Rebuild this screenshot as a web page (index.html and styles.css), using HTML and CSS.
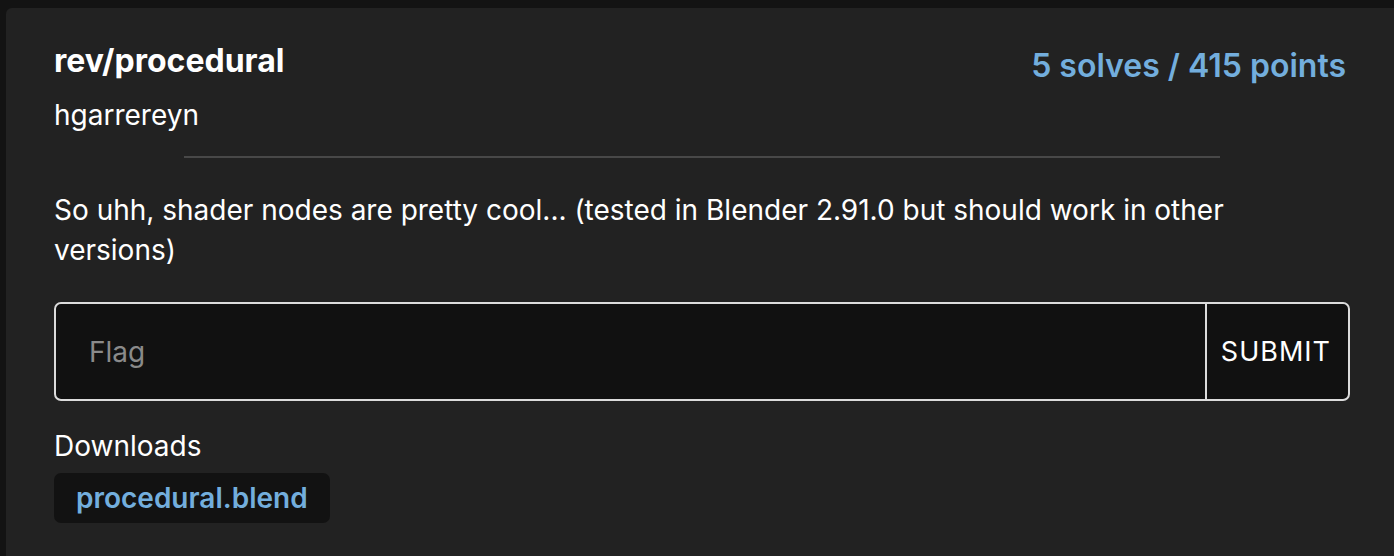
FILE: index.html
```html
<!DOCTYPE html>
<html>
<head>
<meta charset="utf-8">
<link rel="stylesheet" href="styles.css">
</head>
<body>
<div class="page">
  <div class="card">
    <div class="header">
      <div class="titles">
        <div class="title">rev/procedural</div>
        <div class="author">hgarrereyn</div>
      </div>
      <div class="score">5 solves / 415 points</div>
    </div>
    <hr class="divider">
    <p class="desc">So uhh, shader nodes are pretty cool... (tested in Blender 2.91.0 but should work in other versions)</p>
    <form class="flag-form">
      <input class="flag-input" type="text" placeholder="Flag">
      <button class="submit" type="button">SUBMIT</button>
    </form>
    <div class="downloads-label">Downloads</div>
    <div class="downloads">
      <a class="file" href="#">procedural.blend</a>
    </div>
  </div>
</div>
</body>
</html>
```
FILE: styles.css
```css
html, body {
  margin: 0;
  background: #131313;
  overflow: hidden;
}
body {
  font-family: Inter, "Noto Sans", sans-serif;
  color: #fff;
}
.page {
  padding: 8px 0 0 6px;
}
.card {
  background: #222222;
  border-radius: 6px 0 0 0;
  padding: 33px 44px 40px 48px;
  min-height: 560px;
  box-sizing: border-box;
}
.header {
  display: flex;
  justify-content: space-between;
  align-items: flex-start;
  padding-right: 4px;
}
.title {
  font-size: 32px;
  font-weight: 700;
  line-height: 40px;
}
.author {
  font-size: 28px;
  line-height: 36px;
  margin-top: 16px;
}
.score {
  font-size: 32px;
  font-weight: 600;
  color: #73aedd;
  line-height: 40px;
  margin-top: 5px;
}
.divider {
  width: 80%;
  border: 0;
  border-top: 2px solid #484848;
  margin: 23px auto 0;
}
.desc {
  font-size: 28px;
  line-height: 40px;
  margin: 32px 0 0;
}
.flag-form {
  display: flex;
  margin-top: 32px;
  height: 99px;
  border: 2px solid #dcdcdc;
  border-radius: 7px;
  background: #111111;
  overflow: hidden;
  box-sizing: border-box;
}
.flag-input {
  flex: 1;
  background: transparent;
  border: 0;
  outline: none;
  padding: 0 33px;
  font-family: inherit;
  font-size: 28px;
  color: #fff;
}
.flag-input::placeholder {
  color: #8a8a8a;
}
.submit {
  background: transparent;
  border: 0;
  border-left: 2px solid #dcdcdc;
  color: #fff;
  font-family: inherit;
  font-size: 27px;
  letter-spacing: 1px;
  padding: 0 17px 0 14px;
}
.downloads-label {
  font-size: 28px;
  line-height: 36px;
  margin-top: 27px;
}
.downloads {
  display: flex;
  margin-top: 9px;
}
.file {
  background: #121212;
  border-radius: 7px;
  padding: 0 22px;
  height: 50px;
  display: flex;
  align-items: center;
  font-size: 28px;
  font-weight: 600;
  color: #73aedd;
  text-decoration: none;
}
```
